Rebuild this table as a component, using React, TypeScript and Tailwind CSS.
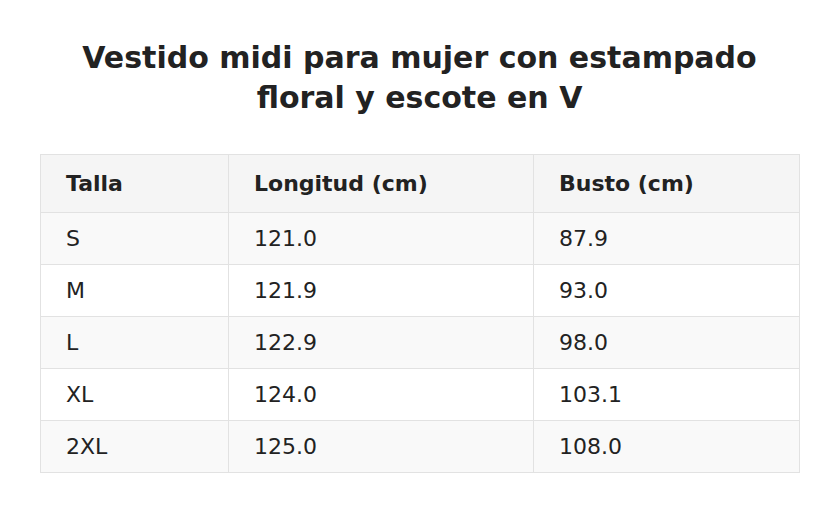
const rows = [
  ["S", "121.0", "87.9"],
  ["M", "121.9", "93.0"],
  ["L", "122.9", "98.0"],
  ["XL", "124.0", "103.1"],
  ["2XL", "125.0", "108.0"],
];

export default function App() {
  return (
    <div className="min-h-[512px] bg-white px-10 pt-[38px] font-['DejaVu_Sans',sans-serif] text-[#222]">
      <h1 className="mx-auto max-w-[720px] text-center text-[30px] font-bold leading-[40px]">
        Vestido midi para mujer con estampado floral y escote en V
      </h1>

      <table className="mt-[36px] w-[760px] border-collapse text-[22px]">
        <thead>
          <tr className="h-[58px] bg-[#f5f5f5]">
            <th className="w-[188px] border border-[#e2e2e2] px-[25px] text-left font-bold">Talla</th>
            <th className="w-[305px] border border-[#e2e2e2] px-[25px] text-left font-bold">Longitud (cm)</th>
            <th className="border border-[#e2e2e2] px-[25px] text-left font-bold">Busto (cm)</th>
          </tr>
        </thead>
        <tbody>
          {rows.map((r, i) => (
            <tr key={r[0]} className={i % 2 === 0 ? "h-[52px] bg-[#f9f9f9]" : "h-[52px] bg-white"}>
              {r.map((c, j) => (
                <td key={j} className="border border-[#e2e2e2] px-[25px]">
                  {c}
                </td>
              ))}
            </tr>
          ))}
        </tbody>
      </table>
    </div>
  );
}
